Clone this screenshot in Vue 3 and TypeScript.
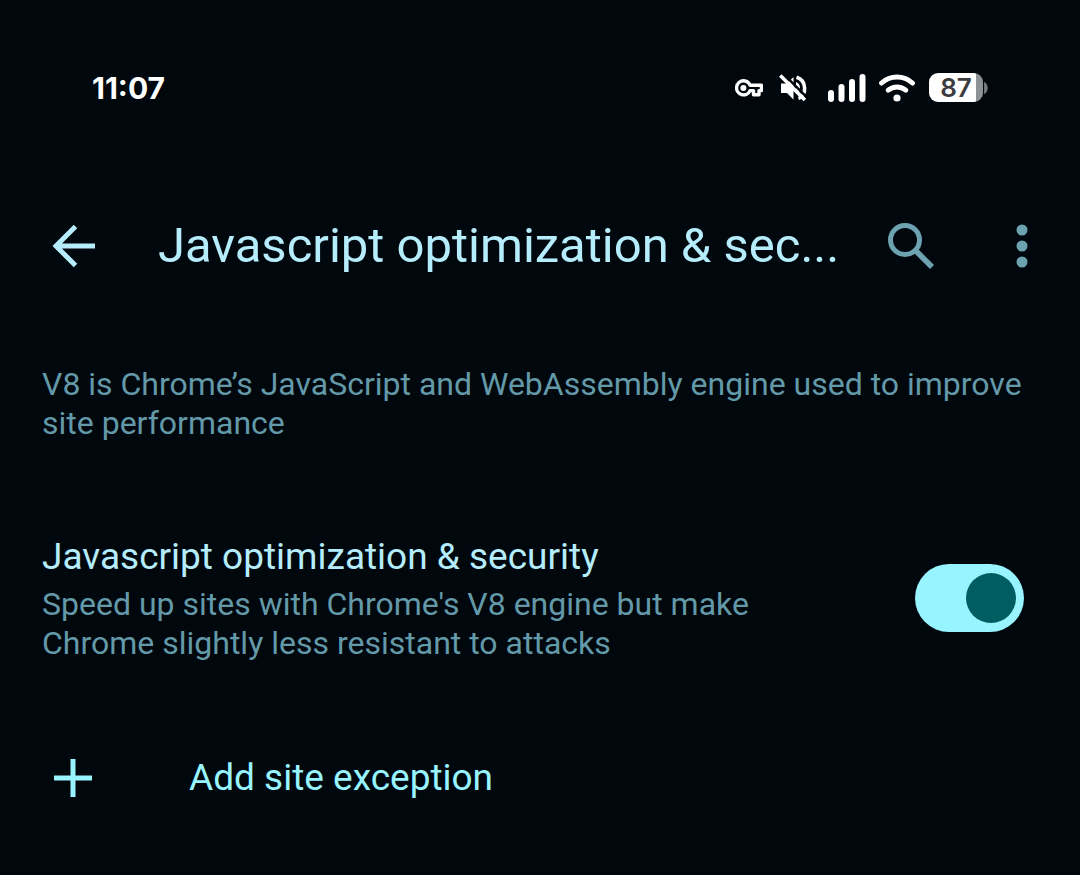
<script setup lang="ts">
import { ref } from 'vue'

const time = '11:07'
const battery = 87
const enabled = ref(true)
</script>

<template>
  <div class="screen">
    <div class="status">
      <time class="clock">{{ time }}</time>
      <div class="indicators">
        <svg class="key" viewBox="0 0 28 18" role="img" aria-label="VPN">
          <path d="M8.700 1.800a7 7 0 1 0 6.300 9.800h3.500v4.200h5.500v-4.200h2.400V6.200H15A7 7 0 0 0 8.700 1.800z" fill="none" stroke="currentColor" stroke-width="3.400" stroke-linejoin="round" />
          <circle cx="8.400" cy="8.900" r="3" fill="currentColor" />
        </svg>
        <svg class="mute" viewBox="0 0 28 28" role="img" aria-label="Muted">
          <path d="M2 9.500h6l6.500-6.500v22.500L8 19H2z" fill="currentColor" />
          <path d="M17.500 3.200c10.500 3 10.500 18.600 2 21.400" fill="none" stroke="currentColor" stroke-width="3.600" />
          <path d="M17 8a6.500 6.500 0 0 1 0 12z" fill="currentColor" />
          <path d="M4-.5l26 26" stroke="#00070d" stroke-width="2.400" />
          <path d="M1.300 1.500l24.600 24.600" stroke="currentColor" stroke-width="3.600" />
        </svg>
        <svg class="signal" viewBox="0 0 38 28" role="img" aria-label="Signal">
          <g fill="currentColor">
            <rect x="0" y="16" width="6" height="12" rx="3" />
            <rect x="10.500" y="10" width="6" height="18" rx="3" />
            <rect x="21" y="5" width="6" height="23" rx="3" />
            <rect x="31.500" y="0" width="6" height="28" rx="3" />
          </g>
        </svg>
        <svg class="wifi" viewBox="0 0 36 28" role="img" aria-label="Wi-Fi">
          <g fill="none" stroke="currentColor" stroke-width="5" stroke-linecap="round">
            <path d="M2.600 9a22.500 22.500 0 0 1 30.800 0" />
            <path d="M9.200 16.200a13.500 13.500 0 0 1 17.600 0" />
          </g>
          <circle cx="18" cy="24" r="3.600" fill="currentColor" />
        </svg>
        <div class="battery">
          <span class="cell">{{ battery }}</span>
          <svg class="cap" viewBox="0 0 4 14" aria-hidden="true">
            <path d="M0 1c5 1 5 11 0 12z" fill="#70777a" />
          </svg>
        </div>
      </div>
    </div>

    <header class="bar">
      <button class="icon back" aria-label="Back">
        <svg viewBox="0 0 44 44"><path d="M23.500 2.500L4 22l19.500 19.500M4 22H43" fill="none" stroke="currentColor" stroke-width="5" /></svg>
      </button>
      <h1 class="title">Javascript optimization &amp; sec...</h1>
      <button class="icon search" aria-label="Search">
        <svg viewBox="0 0 46 46">
          <circle cx="17" cy="17" r="14.500" fill="none" stroke="currentColor" stroke-width="5" />
          <path d="M27 27h4L46 42l-4 4-15-15z" fill="currentColor" />
        </svg>
      </button>
      <button class="icon more" aria-label="More options">
        <svg viewBox="0 0 12 44">
          <g fill="currentColor"><circle cx="6" cy="6" r="5.500" /><circle cx="6" cy="22" r="5.500" /><circle cx="6" cy="38" r="5.500" /></g>
        </svg>
      </button>
    </header>

    <main class="content">
      <p class="note">V8 is Chrome’s JavaScript and WebAssembly engine used to improve site performance</p>

      <div class="setting">
        <label class="words" for="optimizer">
          <span class="name">Javascript optimization &amp; security</span>
          <span class="summary">Speed up sites with Chrome's V8 engine but make Chrome slightly less resistant to attacks</span>
        </label>
        <input id="optimizer" v-model="enabled" class="switch" type="checkbox" role="switch" />
      </div>

      <button class="add">
        <svg viewBox="0 0 38 38" aria-hidden="true"><path d="M19 0v38M0 19h38" stroke="currentColor" stroke-width="5" /></svg>
        <span>Add site exception</span>
      </button>
    </main>
  </div>
</template>

<style>
body {
  margin: 0;
  background: #00070d;
}
</style>

<style scoped>
.screen {
  min-height: 100vh;
  box-sizing: border-box;
  background: #00070d;
  color: #b5edfc;
  font-family: Roboto, "Noto Sans", sans-serif;
}
svg {
  display: block;
}
button {
  padding: 0;
  border: 0;
  background: none;
  color: inherit;
  font: inherit;
  cursor: pointer;
}
.status {
  display: flex;
  align-items: center;
  justify-content: space-between;
  padding: 67px 92px 0;
  height: 41px;
  color: #fff;
}
.clock {
  font: 700 30px/40px Inter, sans-serif;
}
.indicators {
  display: flex;
  align-items: center;
}
.key {
  width: 28px;
  height: 18px;
  margin-right: 16px;
}
.mute {
  width: 28px;
  height: 28px;
  margin-right: 21px;
}
.signal {
  width: 38px;
  height: 28px;
  margin-right: 13px;
}
.wifi {
  width: 36px;
  height: 28px;
  margin-right: 14px;
}
.battery {
  display: flex;
  align-items: center;
  gap: 1px;
}
.cell {
  width: 54px;
  border-radius: 9px;
  background: linear-gradient(90deg, #fff 87%, #8c9396 87%);
  color: #3c3c3e;
  font: 600 26px/29px Inter, sans-serif;
  text-align: center;
}
.cap {
  width: 4px;
  height: 14px;
}
.bar {
  display: flex;
  align-items: center;
  padding: 106px 52px 0;
  height: 64px;
}
.icon {
  flex: none;
}
.back {
  width: 44px;
}
.title {
  flex: 1;
  margin: 0 0 0 62px;
  font-size: 49px;
  font-weight: 400;
  line-height: 64px;
  white-space: nowrap;
}
.search {
  width: 46px;
  margin-right: 82px;
  color: #6da2b1;
}
.more {
  width: 12px;
  color: #6da2b1;
}
.content {
  padding: 87px 56px 56px 42px;
}
.note {
  margin: 0;
  color: #6399a8;
  font-size: 32px;
  line-height: 39px;
}
.setting {
  display: flex;
  align-items: center;
  justify-content: space-between;
  margin-top: 90px;
}
.words {
  display: flex;
  flex-direction: column;
  gap: 4px;
  max-width: 740px;
}
.name {
  font-size: 37px;
  line-height: 48px;
}
.summary {
  color: #6399a8;
  font-size: 32px;
  line-height: 39px;
}
.switch {
  appearance: none;
  flex: none;
  display: flex;
  align-items: center;
  box-sizing: border-box;
  width: 109px;
  height: 68px;
  margin: 0;
  padding: 0 8px;
  border-radius: 34px;
  background: #24434b;
  cursor: pointer;
}
.switch::before {
  content: "";
  width: 50px;
  height: 50px;
  border-radius: 50%;
  background: #6da2b1;
}
.switch:checked {
  justify-content: flex-end;
  background: #98f4ff;
}
.switch:checked::before {
  background: #005e63;
}
.add {
  display: flex;
  align-items: center;
  margin: 89px 0 0 12px;
  color: #98f4ff;
  font-size: 37px;
  line-height: 52px;
}
.add svg {
  width: 38px;
  height: 38px;
  margin-right: 97px;
}
</style>
